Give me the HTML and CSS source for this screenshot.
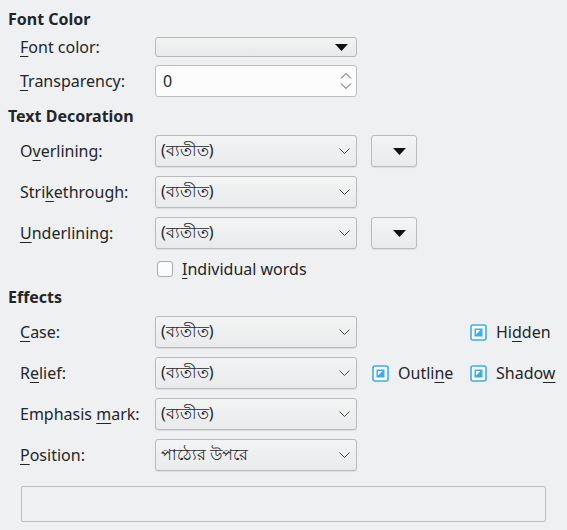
FILE: index.html
```html
<!DOCTYPE html>
<html lang="en">

<head>
    <meta charset="UTF-8">
    <title>Font Effects</title>
    <link rel="stylesheet" href="styles.css">
</head>

<body>
    <div class="page">
        <div class="section-title">Font Color</div>
        <div class="row row-color">
            <span class="label"><u>F</u>ont color:</span>
            <div class="color-list">
                <svg class="tri" width="13" height="7" viewBox="0 0 13 7"><path d="M0 0H13L6.5 7Z" /></svg>
            </div>
        </div>
        <div class="row row-spin">
            <span class="label"><u>T</u>ransparency:</span>
            <div class="spin">
                <span>0</span>
                <svg class="spin-arrows" width="12" height="18" viewBox="0 0 12 18">
                    <path d="M1 6.5L6 1.5L11 6.5M1 11.5L6 16.5L11 11.5" />
                </svg>
            </div>
        </div>

        <div class="section-title title-gap">Text Decoration</div>
        <div class="row">
            <span class="label">O<u>v</u>erlining:</span>
            <div class="combo"><span>(ব্যতীত)</span><svg class="chev" width="11" height="6" viewBox="0 0 11 6"><path d="M0.5 0.5L5.5 5.5L10.5 0.5" /></svg></div>
            <div class="color-btn"><svg class="tri" width="13" height="7" viewBox="0 0 13 7"><path d="M0 0H13L6.5 7Z" /></svg></div>
        </div>
        <div class="row">
            <span class="label">Stri<u>k</u>ethrough:</span>
            <div class="combo"><span>(ব্যতীত)</span><svg class="chev" width="11" height="6" viewBox="0 0 11 6"><path d="M0.5 0.5L5.5 5.5L10.5 0.5" /></svg></div>
        </div>
        <div class="row">
            <span class="label"><u>U</u>nderlining:</span>
            <div class="combo"><span>(ব্যতীত)</span><svg class="chev" width="11" height="6" viewBox="0 0 11 6"><path d="M0.5 0.5L5.5 5.5L10.5 0.5" /></svg></div>
            <div class="color-btn"><svg class="tri" width="13" height="7" viewBox="0 0 13 7"><path d="M0 0H13L6.5 7Z" /></svg></div>
        </div>
        <div class="row row-check">
            <span class="label"></span>
            <span class="check"></span>
            <span class="check-text"><u>I</u>ndividual words</span>
        </div>

        <div class="section-title title-gap2">Effects</div>
        <div class="row">
            <span class="label"><u>C</u>ase:</span>
            <div class="combo"><span>(ব্যতীত)</span><svg class="chev" width="11" height="6" viewBox="0 0 11 6"><path d="M0.5 0.5L5.5 5.5L10.5 0.5" /></svg></div>
            <div class="opts">
                <span class="opt opt-right">
                    <svg class="tick" width="17" height="17" viewBox="0 0 17 17"><rect x="1" y="1" width="15" height="15" rx="2" /><path class="mark" d="M4.5 4.5H12.5V12.5H4.5Z" /><path class="cut" d="M6 6H10.5L6 10.5Z" /></svg>
                    <span>Hi<u>d</u>den</span>
                </span>
            </div>
        </div>
        <div class="row">
            <span class="label">R<u>e</u>lief:</span>
            <div class="combo"><span>(ব্যতীত)</span><svg class="chev" width="11" height="6" viewBox="0 0 11 6"><path d="M0.5 0.5L5.5 5.5L10.5 0.5" /></svg></div>
            <div class="opts">
                <span class="opt">
                    <svg class="tick" width="17" height="17" viewBox="0 0 17 17"><rect x="1" y="1" width="15" height="15" rx="2" /><path class="mark" d="M4.5 4.5H12.5V12.5H4.5Z" /><path class="cut" d="M6 6H10.5L6 10.5Z" /></svg>
                    <span>Outli<u>n</u>e</span>
                </span>
                <span class="opt opt-right">
                    <svg class="tick" width="17" height="17" viewBox="0 0 17 17"><rect x="1" y="1" width="15" height="15" rx="2" /><path class="mark" d="M4.5 4.5H12.5V12.5H4.5Z" /><path class="cut" d="M6 6H10.5L6 10.5Z" /></svg>
                    <span>Shado<u>w</u></span>
                </span>
            </div>
        </div>
        <div class="row">
            <span class="label">Emphasis <u>m</u>ark:</span>
            <div class="combo"><span>(ব্যতীত)</span><svg class="chev" width="11" height="6" viewBox="0 0 11 6"><path d="M0.5 0.5L5.5 5.5L10.5 0.5" /></svg></div>
        </div>
        <div class="row">
            <span class="label"><u>P</u>osition:</span>
            <div class="combo"><span>পাঠ্যের উপরে</span><svg class="chev" width="11" height="6" viewBox="0 0 11 6"><path d="M0.5 0.5L5.5 5.5L10.5 0.5" /></svg></div>
        </div>

        <div class="preview"></div>
    </div>
</body>

</html>
```

FILE: styles.css
```css
body {
    margin: 0;
    padding: 0;
    font-family: "Noto Sans", sans-serif;
    font-size: 16px;
    color: #232629;
    background-color: #eff0f1;
}

u {
    text-underline-offset: 3px;
    text-decoration-thickness: 1px;
}

.page {
    padding: 9px 8px 0 8px;
}

.section-title {
    font-weight: bold;
    line-height: 20px;
}

.title-gap {
    margin-top: 9px;
}

.title-gap2 {
    margin-top: 8px;
}

.row {
    display: flex;
    align-items: center;
    height: 32px;
    margin-top: 9px;
}

.row-color {
    margin-top: 2px;
}

.row-spin {
    margin-top: 2px;
}

.row-check {
    height: 20px;
    margin-top: 10px;
}

.label {
    width: 135px;
    padding-left: 12px;
    flex-shrink: 0;
    white-space: nowrap;
}

.color-list {
    width: 202px;
    height: 20px;
    box-sizing: border-box;
    border: 1px solid #b6b8ba;
    border-radius: 3px;
    background: linear-gradient(#f2f3f3, #e8e9ea);
    display: flex;
    align-items: center;
    justify-content: flex-end;
    padding-right: 8px;
}

.tri path {
    fill: #111;
}

.spin {
    width: 202px;
    height: 32px;
    box-sizing: border-box;
    border: 1px solid #bcbebf;
    border-radius: 3px;
    background-color: #fcfcfc;
    display: flex;
    align-items: center;
    justify-content: space-between;
    padding: 0 4px 0 7px;
}

.spin-arrows path {
    fill: none;
    stroke: #55585b;
    stroke-width: 1;
}

.combo {
    width: 202px;
    height: 32px;
    box-sizing: border-box;
    border: 1px solid #b9bbbd;
    border-radius: 3px;
    background: linear-gradient(#f3f4f4, #e9eaeb);
    box-shadow: 0 1px 1px rgba(0, 0, 0, 0.08);
    display: flex;
    align-items: center;
    justify-content: space-between;
    padding: 0 6px 0 5px;
    flex-shrink: 0;
}

.chev path {
    fill: none;
    stroke: #44474a;
    stroke-width: 1;
}

.color-btn {
    width: 46px;
    height: 32px;
    box-sizing: border-box;
    margin-left: 14px;
    border: 1px solid #b9bbbd;
    border-radius: 3px;
    background: linear-gradient(#f3f4f4, #e9eaeb);
    box-shadow: 0 1px 1px rgba(0, 0, 0, 0.08);
    display: flex;
    align-items: center;
    justify-content: flex-end;
    padding-right: 10px;
}

.check {
    width: 16px;
    height: 16px;
    box-sizing: border-box;
    margin-left: 2px;
    border: 1px solid #a9abad;
    border-radius: 3px;
    background-color: #fcfcfc;
}

.check-text {
    margin-left: 9px;
}

.opts {
    flex: 1;
    display: flex;
    align-items: center;
    padding-left: 15px;
}

.opt {
    display: flex;
    align-items: center;
    gap: 9px;
}

.opt-right {
    margin-left: auto;
    width: 89px;
}

.tick {
    flex-shrink: 0;
}

.tick rect {
    fill: #fcfcfc;
    stroke: #3daee9;
    stroke-width: 1.6;
}

.tick .mark {
    fill: #3daee9;
}

.tick .cut {
    fill: #fcfcfc;
}

.preview {
    margin: 15px 13px 0 13px;
    height: 36px;
    box-sizing: border-box;
    border: 1px solid #bcbebf;
    border-radius: 2px;
    background-color: #eff0f1;
}
```
